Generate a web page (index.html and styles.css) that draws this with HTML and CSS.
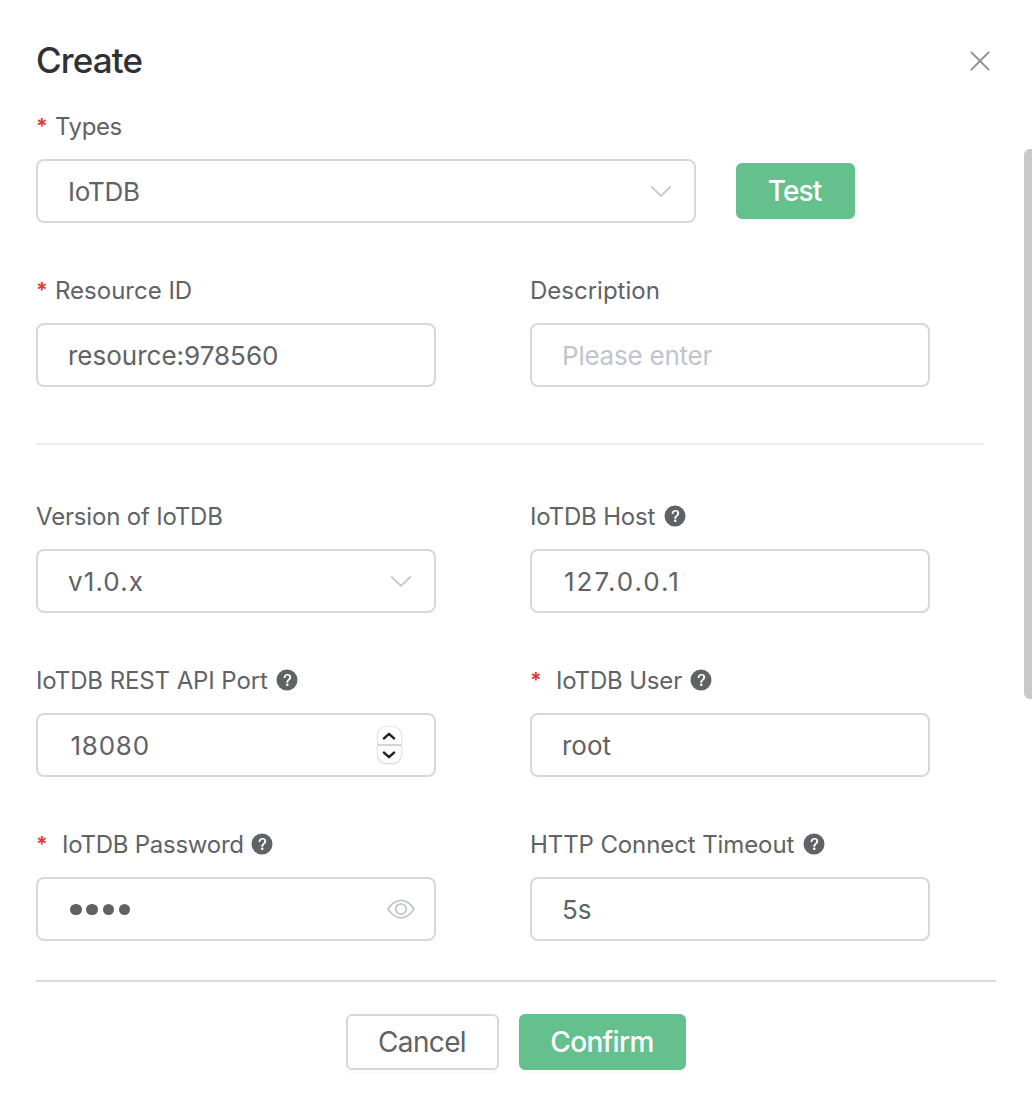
FILE: index.html
```html
<!DOCTYPE html>
<html lang="en">
<head>
<meta charset="utf-8">
<title>Create</title>
<link rel="stylesheet" href="styles.css">
</head>
<body>
<svg class="sprite" aria-hidden="true">
  <symbol id="help" viewBox="0 0 1024 1024"><path d="M512 64a448 448 0 1 1 0 896 448 448 0 0 1 0-896zm23.744 191.488c-52.096 0-92.928 14.784-123.2 44.352-30.976 29.568-45.76 70.4-45.76 122.496h80.256c0-29.568 5.632-52.8 17.6-68.992 13.376-19.712 35.2-28.864 66.176-28.864 23.936 0 42.944 6.336 56.32 19.712 12.672 13.376 19.712 31.68 19.712 54.912 0 17.6-6.336 34.496-19.008 49.984l-8.448 9.856c-45.76 40.832-73.216 70.4-82.368 89.408-9.856 19.008-14.08 42.24-14.08 68.992v9.856h80.96v-9.856c0-16.896 3.52-31.68 10.56-45.76 6.336-12.672 15.488-24.64 28.16-35.2 33.792-29.568 54.208-48.576 60.544-55.616 16.896-22.528 26.048-51.392 26.048-86.592 0-42.944-14.08-76.736-42.24-101.376-28.16-25.344-65.472-37.312-111.232-37.312zm-12.672 406.208a54.272 54.272 0 0 0-38.72 14.784 49.408 49.408 0 0 0-15.488 38.016c0 15.488 4.928 28.16 15.488 38.016A54.848 54.848 0 0 0 523.072 768c15.488 0 28.16-4.928 38.72-14.784a51.52 51.52 0 0 0 16.192-38.72 51.968 51.968 0 0 0-15.488-38.016 55.936 55.936 0 0 0-39.424-14.784z"/></symbol>
  <symbol id="arrow-down" viewBox="0 0 1024 1024"><path d="M831.872 340.864 512 652.672 192.128 340.864a30.592 30.592 0 0 0-42.752 0 29.12 29.12 0 0 0 0 41.6L489.664 714.24a32 32 0 0 0 44.672 0l340.288-331.712a29.12 29.12 0 0 0 0-41.728 30.592 30.592 0 0 0-42.752 0z"/></symbol>
  <symbol id="close" viewBox="0 0 1024 1024"><path d="M764.288 214.592 512 466.88 259.712 214.592a31.936 31.936 0 0 0-45.12 45.12L466.752 512 214.528 764.224a31.936 31.936 0 1 0 45.12 45.184L512 557.184l252.288 252.288a31.936 31.936 0 0 0 45.12-45.12L557.12 512.064l252.288-252.352a31.936 31.936 0 1 0-45.12-45.184z"/></symbol>
  <symbol id="view" viewBox="0 0 1024 1024"><path d="M512 160c320 0 512 352 512 352S832 864 512 864 0 512 0 512s192-352 512-352zm0 64c-225.28 0-384.128 208.064-436.8 288 52.608 79.872 211.456 288 436.8 288 225.28 0 384.128-208.064 436.8-288-52.608-79.872-211.456-288-436.8-288zm0 64a224 224 0 1 1 0 448 224 224 0 0 1 0-448zm0 64a160.192 160.192 0 0 0-160 160c0 88.192 71.744 160 160 160s160-71.808 160-160-71.744-160-160-160z"/></symbol>
</svg>

<div class="dialog">
  <header class="dialog-header">
    <h1 class="title">Create</h1>
    <svg class="icon-close"><use href="#close"/></svg>
  </header>

  <main class="dialog-body">
    <div class="type-row">
      <div class="field wide">
        <div class="label"><span class="star">*</span><span class="snug">Types</span></div>
        <div class="control"><span class="name">IoTDB</span><svg class="icon-field"><use href="#arrow-down"/></svg></div>
      </div>
      <button class="btn primary test">Test</button>
    </div>

    <div class="grid">
      <div class="field">
        <div class="label"><span class="star">*</span>Resource ID</div>
        <div class="control"><span>resource:978560</span></div>
      </div>
      <div class="field">
        <div class="label">Description</div>
        <div class="control"><span class="placeholder">Please enter</span></div>
      </div>
    </div>

    <hr class="divider">

    <div class="grid">
      <div class="field">
        <div class="label"><span class="tight">Version of IoTDB</span></div>
        <div class="control"><span class="version">v1.0.x</span><svg class="icon-field"><use href="#arrow-down"/></svg></div>
      </div>
      <div class="field">
        <div class="label"><span class="tight">IoTDB Host</span><svg class="icon-help"><use href="#help"/></svg></div>
        <div class="control"><span class="address">127.0.0.1</span></div>
      </div>
      <div class="field">
        <div class="label"><span class="close-set">IoTDB REST API Port</span><svg class="icon-help near"><use href="#help"/></svg></div>
        <div class="control">
          <span class="port">18080</span>
          <span class="stepper">
            <span class="step"><svg viewBox="0 0 14 8"><path d="M2 6.4 7 1.8l5 4.6"/></svg></span>
            <span class="step"><svg viewBox="0 0 14 8"><path d="M2 1.6 7 6.2l5-4.6"/></svg></span>
          </span>
        </div>
      </div>
      <div class="field">
        <div class="label"><span class="star spaced">*</span><span class="tight">IoTDB User</span><svg class="icon-help near"><use href="#help"/></svg></div>
        <div class="control">root</div>
      </div>
      <div class="field">
        <div class="label"><span class="star spaced">*</span><span class="snugger">IoTDB Password</span><svg class="icon-help nearer"><use href="#help"/></svg></div>
        <div class="control">
          <span class="dots"><i></i><i></i><i></i><i></i></span>
          <svg class="icon-field"><use href="#view"/></svg>
        </div>
      </div>
      <div class="field">
        <div class="label"><span class="close-set">HTTP Connect Timeout</span><svg class="icon-help"><use href="#help"/></svg></div>
        <div class="control">5s</div>
      </div>
    </div>
    <div class="scrollbar"></div>
  </main>

  <footer class="dialog-footer">
    <button class="btn cancel">Cancel</button>
    <button class="btn primary confirm">Confirm</button>
  </footer>
</div>
</body>
</html>
```
FILE: styles.css
```css
* { box-sizing: border-box; }

body {
  margin: 0;
  background: #fff;
  color: #606266;
  font-family: Inter, "Liberation Sans", sans-serif;
  overflow: hidden;
}

svg { fill: currentColor; flex: none; }
.sprite { position: absolute; width: 0; height: 0; }

.dialog {
  display: flex;
  flex-direction: column;
  width: 1032px;
  height: 1108px;
}

.dialog-header {
  display: flex;
  align-items: center;
  justify-content: space-between;
  height: 95px;
  padding: 27px 36px 0;
}

.title {
  margin: 0 0 2px;
  color: #303133;
  font-size: 35px;
  font-weight: 500;
  line-height: 66px;
  letter-spacing: -0.9px;
}

.icon-close { width: 32px; height: 32px; color: #909399; }

.dialog-body {
  position: relative;
  flex: none;
  height: 885px;
  padding: 0 36px;
}

.type-row { display: flex; gap: 40px; align-items: flex-end; }

.grid {
  display: grid;
  grid-template-columns: 400px 400px;
  column-gap: 94px;
  row-gap: 36px;
}
.type-row + .grid { margin-top: 36px; }

.field { width: 400px; }
.wide { width: 660px; }

.label {
  display: flex;
  align-items: center;
  height: 64px;
  font-size: 24px;
  line-height: 64px;
  white-space: pre;
}

.snug { letter-spacing: -0.4px; }
.snugger { letter-spacing: -0.25px; }
.tight { letter-spacing: -0.18px; }
.close-set { letter-spacing: -0.1px; }

.star {
  width: 19px;
  padding-bottom: 1px;
  color: #e23c39;
  font-size: 21px;
  font-weight: 700;
  line-height: 63px;
}
.spaced { width: 26px; }

.icon-help { width: 24px; height: 24px; margin: -2px 0 0 8px; }
.near { margin-left: 7px; }
.nearer { margin-left: 6px; }

.control {
  display: flex;
  align-items: center;
  justify-content: space-between;
  height: 64px;
  padding: 2px 19px 0 30px;
  border: 2px solid #d8d8d8;
  border-radius: 8px;
  font-size: 26px;
  line-height: 58px;
}

.name { letter-spacing: -0.27px; }
.placeholder { color: #c0c4cc; letter-spacing: -0.23px; }
.version { letter-spacing: 1.1px; }
.address { padding-left: 2px; letter-spacing: 2px; }
.port { padding-left: 2.5px; letter-spacing: 0.75px; }

.icon-field { width: 28px; height: 28px; margin-top: -3px; color: #c0c4cc; }

.stepper {
  display: flex;
  flex-direction: column;
  width: 23px;
  height: 36px;
  margin: -2px 14.5px 0 0;
  border-radius: 8px;
  box-shadow: 0 0 2px rgba(0, 0, 0, 0.3), 0 1px 2px rgba(0, 0, 0, 0.1);
}
.step { display: flex; flex: 1; align-items: center; justify-content: center; }
.step + .step { border-top: 2px solid #d4d4d4; }
.step svg {
  width: 14px;
  height: 8px;
  fill: none;
  stroke: #222;
  stroke-width: 2.5;
  stroke-linecap: round;
  stroke-linejoin: round;
}

.dots { display: flex; gap: 4.6px; padding: 0 0 1px 2.2px; }
.dots i { width: 11.6px; height: 11.6px; border-radius: 50%; background: #606266; }

.divider {
  width: 948px;
  height: 2px;
  margin: 56px 0 40px;
  border: 0;
  background: #ebecef;
}

.scrollbar {
  position: absolute;
  top: 54px;
  right: 0;
  width: 8px;
  height: 550px;
  border-radius: 6px 0 0 6px;
  background: #c9c9c9;
}

.dialog-footer {
  display: flex;
  justify-content: center;
  gap: 20px;
  flex: 1;
  margin: 0 36px;
  padding-top: 32px;
  border-top: 2px solid #d8d8d8;
}

.btn {
  height: 56px;
  padding: 0 1px 0 0;
  border: 2px solid #d8d8d8;
  border-radius: 6px;
  background: #fff;
  box-shadow: 0 4px 0 rgba(0, 0, 0, 0.015);
  color: #606266;
  font-family: inherit;
  font-size: 28px;
  line-height: 52px;
  letter-spacing: -0.66px;
}
.primary { border-color: #64c08c; background: #64c08c; color: #fff; font-weight: 500; }
.test { width: 119px; margin-bottom: 4px; padding-right: 2px; letter-spacing: -0.87px; }
.cancel { width: 153px; }
.confirm { width: 167px; }
```
